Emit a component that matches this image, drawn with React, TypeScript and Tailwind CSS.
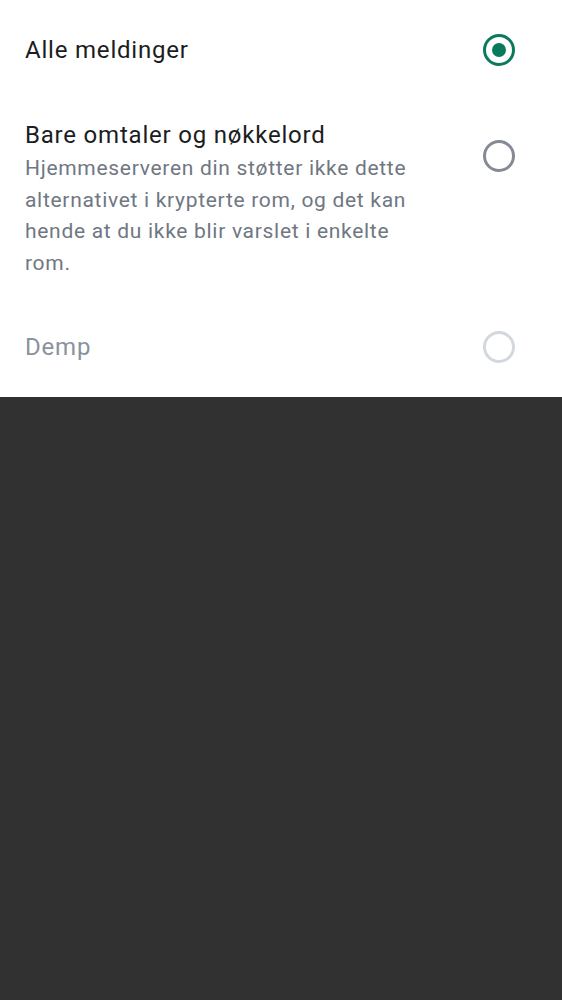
import React from "react";

const font = { fontFamily: "Roboto, 'Noto Sans', sans-serif" };

const Radio = ({ state }: { state: "on" | "off" | "disabled" }) => {
  if (state === "on") {
    return (
      <div className="w-[32px] h-[32px] rounded-full border-[3px] border-[#0a7a5f] flex items-center justify-center">
        <div className="w-[14px] h-[14px] rounded-full bg-[#0a7a5f]" />
      </div>
    );
  }
  return (
    <div
      className={
        state === "off"
          ? "w-[32px] h-[32px] rounded-full border-[3px] border-[#858b94]"
          : "w-[32px] h-[32px] rounded-full border-[3px] border-[#d3d8df]"
      }
    />
  );
};

export default function App() {
  return (
    <div className="min-h-[1000px] bg-[#313131]" style={font}>
      <div className="bg-white">
        <div className="h-[100px] flex items-center justify-between pl-[25px] pr-[47px]">
          <span className="text-[24px] tracking-[0.8px] text-[#1b1d22]">Alle meldinger</span>
          <Radio state="on" />
        </div>

        <div className="flex items-start justify-between pl-[25px] pr-[47px] pt-[20px] pb-[18px]">
          <div className="w-[400px]">
            <div className="text-[24px] tracking-[0.8px] leading-[30px] text-[#1b1d22]">Bare omtaler og nøkkelord</div>
            <div className="mt-[3px] text-[21px] tracking-[0.7px] leading-[31.5px] text-[#6f7782]">
              Hjemmeserveren din støtter ikke dette alternativet i krypterte rom, og det kan hende at du ikke blir varslet i enkelte rom.
            </div>
          </div>
          <div className="mt-[20px]">
            <Radio state="off" />
          </div>
        </div>

        <div className="h-[100px] flex items-center justify-between pl-[25px] pr-[47px]">
          <span className="text-[24px] tracking-[0.8px] text-[#8a929d]">Demp</span>
          <Radio state="disabled" />
        </div>
      </div>
    </div>
  );
}
